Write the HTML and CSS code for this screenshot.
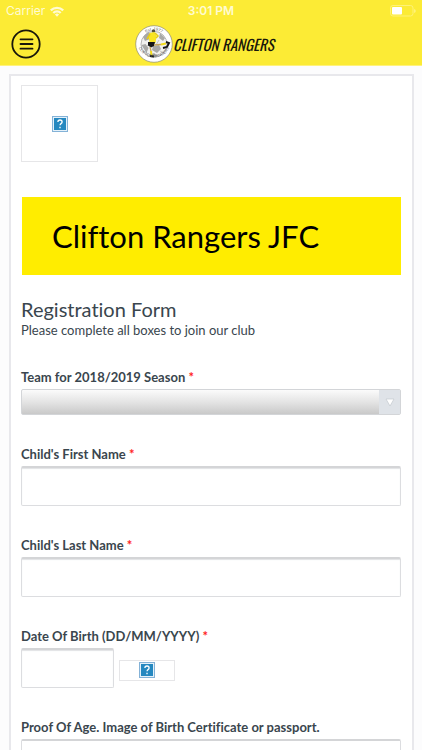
FILE: index.html
```html
<!DOCTYPE html>
<html lang="en">
<head>
<meta charset="utf-8">
<meta name="viewport" content="width=device-width, initial-scale=1">
<title>Clifton Rangers JFC</title>
<link rel="stylesheet" href="styles.css">
</head>
<body>
<header class="top">
  <div class="status">
    <div class="carrier">
      <span>Carrier</span>
      <svg width="14" height="11" viewBox="0 0 14 11" aria-hidden="true">
        <g fill="none" stroke="#fffbd2" stroke-width="2.300">
          <path d="M.8 4.400a8.800 8.800 0 0 1 12.400 0"/>
          <path d="M3.300 7a5.200 5.200 0 0 1 7.400 0"/>
        </g>
        <path d="M4.900 8.500a3 3 0 0 1 4.200 0L7 10.700z" fill="#fffbd2"/>
      </svg>
    </div>
    <span class="time">3:01 PM</span>
    <svg class="battery" width="26" height="12" viewBox="0 0 26 12" aria-hidden="true">
      <rect x=".5" y=".5" width="22.500" height="10.500" rx="2.500" fill="none" stroke="#fff276"/>
      <rect x="2" y="2" width="10" height="7.500" rx="1" fill="#fff"/>
      <path d="M24.200 4v4q1.500-.6 1.500-2t-1.500-2z" fill="#fff48a"/>
    </svg>
  </div>
  <div class="bar">
    <button class="menu" type="button" aria-label="Menu">
      <svg width="30" height="30" viewBox="0 0 30 30" aria-hidden="true">
        <circle cx="15" cy="15" r="13.700" fill="none" stroke="#18170b" stroke-width="1.800"/>
        <path d="M9.500 10.300h12M9.500 15h12M9.500 19.700h12" stroke="#18170b" stroke-width="1.800" stroke-linecap="round"/>
      </svg>
    </button>
    <a class="brand" href="#">
      <svg width="38" height="38" viewBox="0 0 38 38" aria-hidden="true">
        <defs>
          <path id="arc-top" d="M5.200 19a13.800 13.800 0 0 1 27.600 0"/>
          <path id="arc-bottom" d="M1.800 17a17.300 17.300 0 0 0 34.400 0"/>
        </defs>
        <circle cx="19" cy="19" r="18.300" fill="#fff" stroke="#8d8a70" stroke-width=".7"/>
        <circle cx="19" cy="19.300" r="13" fill="#f1f1ef" stroke="#999" stroke-width=".7"/>
        <path d="M8 12l5-5 3 2-1 5-5 2zM6.500 20l4-1 3 4-2 5zM18 21l6-1 2 4-4 4-5-3zM25 8l5 5-2 3-4-3zM14 30l5-2 4 3-4 1z" fill="#a9a9a7"/>
        <path d="M12 21l5-3M24 15l-3 5M25 26l4 2M17 26l-2 4" stroke="#aaa" stroke-width=".6"/>
        <circle cx="18.500" cy="6" r="1.700" fill="#54503a"/>
        <path d="M14.500 8l5-1 2 4-1 7-6-1-1-5z" fill="#f9e523"/>
        <path d="M20 8l3 3-2 2M15 9l-3 5" fill="none" stroke="#e4cc18" stroke-width="1.500"/>
        <path d="M13 17l7 0-1 4-3 1.500-3-2z" fill="#161616"/>
        <path d="M15 22l1 4M19 20l7-.5" stroke="#c4a45b" stroke-width="1.300"/>
        <path d="M16 26l.5 5M26 19.500l5-1" stroke="#f2dc1a" stroke-width="2"/>
        <path d="M15 31l4 .5M31 17l3 1-2 4-4 1" fill="none" stroke="#151515" stroke-width="1.900"/>
        <text class="crest-text"><textPath href="#arc-top" startOffset="50%" text-anchor="middle">Est. 1977</textPath></text>
        <text class="crest-text"><textPath href="#arc-bottom" startOffset="50%" text-anchor="middle">CLIFTON RANGERS</textPath></text>
      </svg>
      <span>CLIFTON RANGERS</span>
    </a>
  </div>
</header>
<main class="page">
  <form class="card">
    <div class="picture logo-picture" role="img" aria-label="Club logo">
      <svg class="missing" viewBox="0 0 16 16" aria-hidden="true"><rect x=".5" y=".5" width="15" height="15" fill="#e4f1fa" stroke="#84b2d7"/><rect x="2" y="2" width="12" height="12" fill="#2588c0"/><path d="M5.900 6q0-2 2.100-2t2.100 1.900q0 1-1.100 1.700-.9.600-.9 1.600M8 10.700v1.600" fill="none" stroke="#fff" stroke-width="1.300"/></svg>
    </div>
    <h1 class="banner">Clifton Rangers JFC</h1>
    <h2 class="heading">Registration Form</h2>
    <p class="intro">Please complete all boxes to join our club</p>
    <div class="fields">
      <div class="field">
        <label for="team">Team for 2018/2019 Season <span class="required">*</span></label>
        <div class="select-wrap">
          <select id="team"><option></option></select>
          <span class="arrow"><svg width="10" height="9" viewBox="0 0 10 9" aria-hidden="true"><path d="M1 1h8L5 8z" fill="#fff" stroke="#c3c9ce" stroke-width=".7"/></svg></span>
        </div>
      </div>
      <div class="field">
        <label for="first">Child's First Name <span class="required">*</span></label>
        <input id="first" type="text">
      </div>
      <div class="field">
        <label for="last">Child's Last Name <span class="required">*</span></label>
        <input id="last" type="text">
      </div>
      <div class="field">
        <label for="birth">Date Of Birth (DD/MM/YYYY) <span class="required">*</span></label>
        <div class="date-row">
          <input id="birth" type="text">
          <button class="picture date-picture" type="button" aria-label="Choose date">
            <svg class="missing" viewBox="0 0 16 16" aria-hidden="true"><rect x=".5" y=".5" width="15" height="15" fill="#e4f1fa" stroke="#84b2d7"/><rect x="2" y="2" width="12" height="12" fill="#2588c0"/><path d="M5.900 6q0-2 2.100-2t2.100 1.900q0 1-1.100 1.700-.9.600-.9 1.600M8 10.700v1.600" fill="none" stroke="#fff" stroke-width="1.300"/></svg>
          </button>
        </div>
      </div>
      <div class="field">
        <label for="proof">Proof Of Age. Image of Birth Certificate or passport.</label>
        <input id="proof" class="plain" type="text">
      </div>
    </div>
  </form>
</main>
</body>
</html>
```
FILE: styles.css
```css
* {
  box-sizing: border-box;
}

body {
  margin: 0;
  height: 100vh;
  display: flex;
  flex-direction: column;
  background: #fcfcfd;
  color: #3a464e;
  font-family: Lato, "Liberation Sans", sans-serif;
  font-size: 13px;
  font-variant-ligatures: none;
}

.top {
  flex: none;
  background: #fceb35;
  border-bottom: 1px solid #fff27c;
}

.status {
  display: grid;
  grid-template-columns: 1fr auto 1fr;
  align-items: center;
  height: 22px;
  padding: 0 6px;
  color: #fffbd2;
  font: 12px/22px Inter, "Liberation Sans", sans-serif;
}

.carrier {
  display: flex;
  align-items: center;
  gap: 5px;
}

.time {
  font-weight: 600;
}

.battery {
  justify-self: end;
}

.bar {
  display: grid;
  grid-template-columns: 1fr auto 1fr;
  align-items: center;
  height: 43px;
  padding: 0 11px;
}

.menu {
  width: 30px;
  height: 30px;
  padding: 0;
  border: 0;
  background: none;
}

.menu svg,
.brand svg,
.battery {
  display: block;
}

.brand {
  display: flex;
  align-items: center;
  padding-right: 13px;
  color: #18170b;
  text-decoration: none;
  white-space: nowrap;
  font: italic 15px/20px Oswald, "Roboto Condensed", "Liberation Sans Narrow", sans-serif;
}

.crest-text {
  font: 4px "Liberation Sans", sans-serif;
  fill: #555;
}

.page {
  flex: 1;
  min-height: 0;
  overflow-y: auto;
  scrollbar-width: none;
  padding: 8px 8px 8px 9px;
}

.card {
  padding: 9px 11px 30px 10px;
  border: 2px solid #e8e8ec;
  background: #fff;
}

.picture {
  display: flex;
  align-items: center;
  justify-content: center;
  padding: 0;
  border: 1px solid #e6e6e8;
  background: #fff;
}

.logo-picture {
  width: 77px;
  height: 77px;
}

.missing {
  display: block;
  width: 16px;
  height: 16px;
}

.banner {
  margin: 35px 0 0 1px;
  padding: 20px 30px;
  background: #ffed00;
  color: #000;
  font-size: 31px;
  font-weight: 400;
  line-height: 38px;
}

.heading {
  margin: 22px 0 0;
  font-size: 20px;
  font-weight: 400;
  line-height: 24px;
}

.intro {
  margin: 0;
  line-height: 18px;
}

.fields {
  display: flex;
  flex-direction: column;
  gap: 29px;
  margin-top: 28px;
}

.field {
  display: flex;
  flex-direction: column;
  gap: 2px;
}

label {
  font-weight: 700;
  line-height: 20px;
}

.required {
  color: #f22;
}

input {
  width: 100%;
  height: 40px;
  padding: 0 8px;
  border: 1px solid #dcdde0;
  border-top: 2px solid #d4d5d7;
  border-radius: 2px;
  background: #fff;
  box-shadow: inset 0 1px 1px #e2e3e5;
  color: inherit;
  font: inherit;
}

.plain {
  box-shadow: none;
}

.select-wrap {
  display: grid;
  grid-template-columns: 1fr 22px;
}

select {
  grid-area: 1 / 1 / 2 / 3;
  height: 26px;
  appearance: none;
  border: 1px solid #d3d5d8;
  border-radius: 2px;
  background: linear-gradient(#fbfbfb, #e4e4e4 50%, #c9c9c9);
}

.arrow {
  grid-area: 1 / 2;
  display: flex;
  align-items: center;
  justify-content: center;
  margin: 1px 1px 1px 0;
  background: #dfe3e8;
  pointer-events: none;
}

.arrow svg {
  flex: none;
}

.date-row {
  display: flex;
  align-items: center;
  gap: 5px;
}

.date-row input {
  width: 93px;
}

.date-picture {
  width: 56px;
  height: 21px;
  margin-top: 4px;
}
```
